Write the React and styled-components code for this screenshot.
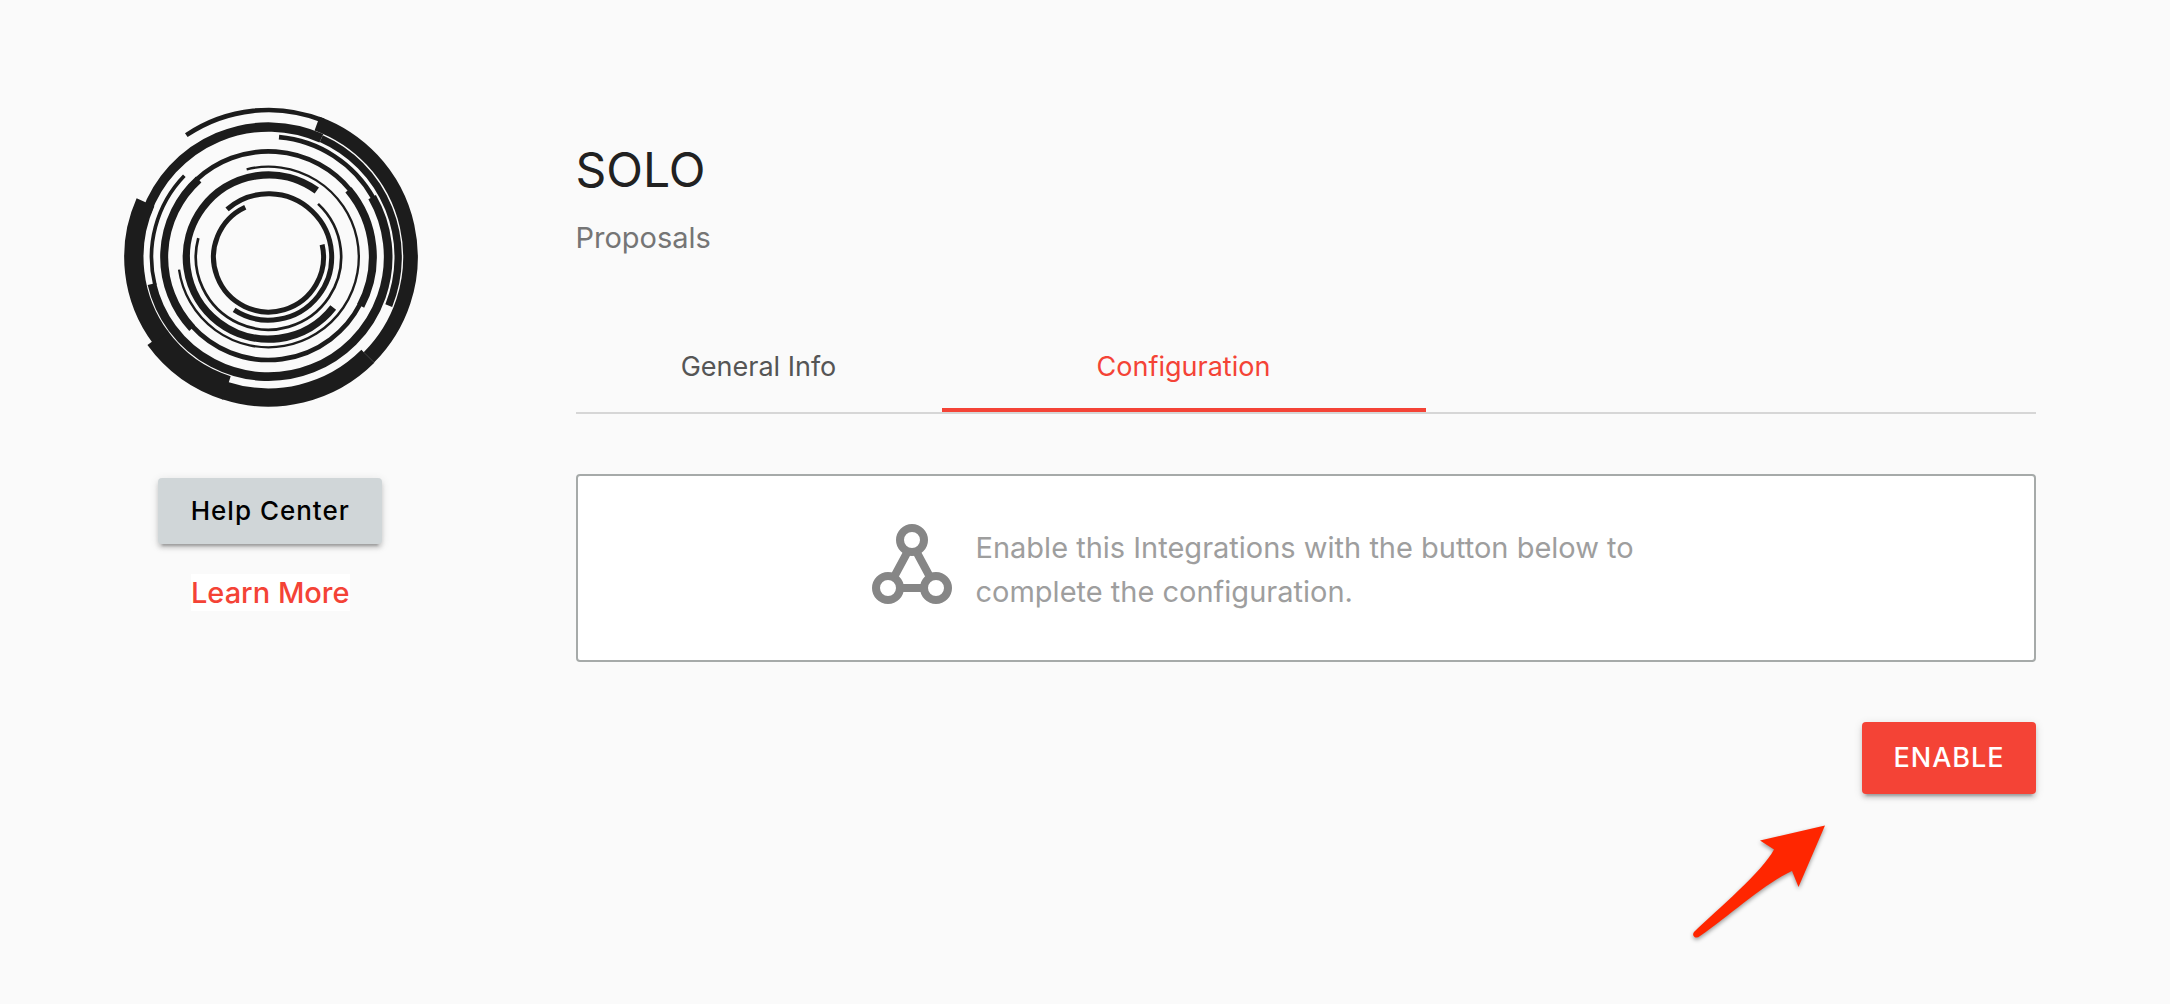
import React from "react";
import styled, { createGlobalStyle } from "styled-components";

const CENTER = { x: 475, y: 486 };

// radius, stroke width, start angle, end angle (degrees, clockwise from the right)
const rings = [
  [441, 14, 236, 292],
  [426, 44, 290, 405],
  [390, 28, 200, 294],
  [389, 22, 294, 382],
  [361, 14, 275, 331],
  [359, 26, 330, 527],
  [351, 11, 166, 224],
  [421.5, 55, 45, 108],
  [412, 74, 107.6, 144],
  [404, 58, 143, 204],
  [317, 14, 227, 321],
  [313, 24, 320, 388],
  [309, 14, 27, 138],
  [313, 24, 137, 228],
  [271, 7, 256, 532],
  [246.5, 22, 38, 306],
  [218, 8, -47, 195],
  [189.5, 15, -131, 123],
  [165, 15, -13, 245],
];

const point = (radius, angle) => {
  const rad = (angle * Math.PI) / 180;
  const x = CENTER.x + radius * Math.cos(rad);
  const y = CENTER.y + radius * Math.sin(rad);
  return `${x.toFixed(1)} ${y.toFixed(1)}`;
};

const arc = (radius, start, end) => {
  const large = end - start > 180 ? 1 : 0;
  return `M${point(radius, start)}A${radius} ${radius} 0 ${large} 1 ${point(radius, end)}`;
};

const Logo = () => (
  <LogoImage viewBox="36 36 890 900" role="img" aria-label="SOLO logo">
    {rings.map(([radius, width, start, end], index) => (
      <path key={index} d={arc(radius, start, end)} strokeWidth={width} />
    ))}
  </LogoImage>
);

const IntegrationIcon = () => (
  <PanelIcon viewBox="0 0 96 96" aria-hidden="true">
    <circle cx="48" cy="24" r="12" />
    <circle cx="24" cy="72" r="12" />
    <circle cx="72" cy="72" r="12" />
    <path d="M44 35L30 61M52 35L66 61M36 72H60" />
  </PanelIcon>
);

const Arrow = () => (
  <ArrowImage viewBox="0 0 140 120" aria-hidden="true">
    <path d="M136 5.500L71 20.500L85 29.500C73 52 29 89 5 112Q3 115 5.500 117Q8 118.500 11 116C40 96 76 63 103 51L109.500 67Z" />
  </ArrowImage>
);

const App = () => (
  <>
    <GlobalStyle />
    <Page>
      <Sidebar>
        <Logo />
        <HelpButton type="button">Help Center</HelpButton>
        <LearnMore href="#learn-more">Learn More</LearnMore>
      </Sidebar>
      <Main>
        <Title>SOLO</Title>
        <Category>Proposals</Category>
        <Tabs role="tablist">
          <Tab type="button" role="tab" aria-selected="false">
            General Info
          </Tab>
          <Tab type="button" role="tab" aria-selected="true" $active>
            Configuration
          </Tab>
        </Tabs>
        <Panel role="tabpanel">
          <IntegrationIcon />
          <PanelText>
            Enable this Integrations with the button below to complete the
            configuration.
          </PanelText>
        </Panel>
        <Actions>
          <EnableButton type="button">ENABLE</EnableButton>
          <Arrow />
        </Actions>
      </Main>
    </Page>
  </>
);

const GlobalStyle = createGlobalStyle`
  * {
    box-sizing: border-box;
  }

  body {
    margin: 0;
    background-color: #fafafa;
    color: #212121;
    font-family: Inter, "Liberation Sans", sans-serif;
  }
`;

const Page = styled.div`
  display: grid;
  grid-template-columns: 25% 1fr;
`;

const Sidebar = styled.aside`
  display: flex;
  flex-direction: column;
  align-items: center;
  padding: 107px 2px 0 0;
`;

const LogoImage = styled.svg`
  width: 297px;
  height: 300px;
  fill: none;
  stroke: #1c1c1c;
`;

const BaseButton = styled.button`
  padding: 0 0 2px;
  border: 0;
  border-radius: 4px;
  font-family: inherit;
  font-weight: 500;
  letter-spacing: 1px;
  cursor: pointer;
  box-shadow: 0 6px 2px -4px rgba(0, 0, 0, 0.2),
    0 4px 4px rgba(0, 0, 0, 0.14), 0 2px 10px rgba(0, 0, 0, 0.12);
`;

const HelpButton = styled(BaseButton)`
  width: 224px;
  height: 66px;
  margin-top: 71px;
  background-color: #d0d6d8;
  color: #000;
  font-size: 26px;
`;

const LearnMore = styled.a`
  margin-top: 30px;
  padding-top: 1px;
  background-color: #fff;
  color: #f44336;
  font-size: 29px;
  font-weight: 500;
  line-height: 36px;
  text-decoration: none;
`;

const Main = styled.main`
  padding: 136px 134px 60px 33px;
`;

const Title = styled.h1`
  margin: 0;
  font-size: 48px;
  font-weight: 400;
  line-height: 68px;
`;

const Category = styled.p`
  margin: 12px 0 0;
  color: #757575;
  font-size: 29px;
  line-height: 44px;
`;

const Tabs = styled.div`
  display: grid;
  grid-template-columns: 366px 484px;
  margin-top: 72px;
  border-bottom: 2px solid #d6d6d6;
`;

const Tab = styled.button`
  height: 80px;
  padding: 0 0 8px;
  border: 0;
  border-bottom: 4px solid ${(props) => (props.$active ? "#f44336" : "transparent")};
  background: none;
  color: ${(props) => (props.$active ? "#f44336" : "#555")};
  font-family: inherit;
  font-size: 27px;
  cursor: pointer;
`;

const Panel = styled.section`
  display: flex;
  align-items: flex-start;
  gap: 16px;
  margin-top: 60px;
  padding: 40px 286px 46px;
  border: 2px solid #a6aaa9;
  border-radius: 4px;
  background-color: #fff;
`;

const PanelIcon = styled.svg`
  flex: none;
  width: 96px;
  height: 96px;
  fill: none;
  stroke: #868686;
  stroke-width: 8;
`;

const PanelText = styled.p`
  margin: 0;
  padding-top: 10px;
  color: #9e9e9e;
  font-size: 29px;
  line-height: 44px;
`;

const Actions = styled.div`
  display: flex;
  flex-direction: column;
  align-items: flex-end;
  margin-top: 60px;
`;

const EnableButton = styled(BaseButton)`
  width: 174px;
  height: 72px;
  background-color: #f44336;
  color: #fff;
  font-size: 27px;
`;

const ArrowImage = styled.svg`
  width: 140px;
  height: 120px;
  margin: 26px 207px 0 0;
  fill: #ff2600;
  filter: drop-shadow(0 2px 2px rgba(0, 0, 0, 0.4));
`;

export default App;
